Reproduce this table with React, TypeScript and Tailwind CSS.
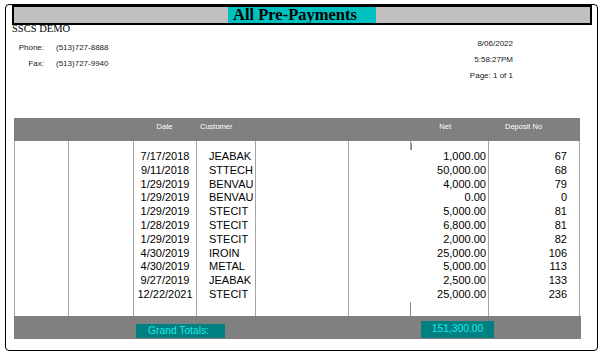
import React from 'react';

type Payment = {
  date: string;
  customer: string;
  net: string;
  deposit: string;
};

const payments: Payment[] = [
  { date: '7/17/2018', customer: 'JEABAK', net: '1,000.00', deposit: '67' },
  { date: '9/11/2018', customer: 'STTECH', net: '50,000.00', deposit: '68' },
  { date: '1/29/2019', customer: 'BENVAU', net: '4,000.00', deposit: '79' },
  { date: '1/29/2019', customer: 'BENVAU', net: '0.00', deposit: '0' },
  { date: '1/29/2019', customer: 'STECIT', net: '5,000.00', deposit: '81' },
  { date: '1/28/2019', customer: 'STECIT', net: '6,800.00', deposit: '81' },
  { date: '1/29/2019', customer: 'STECIT', net: '2,000.00', deposit: '82' },
  { date: '4/30/2019', customer: 'IROIN', net: '25,000.00', deposit: '106' },
  { date: '4/30/2019', customer: 'METAL', net: '5,000.00', deposit: '113' },
  { date: '9/27/2019', customer: 'JEABAK', net: '2,500.00', deposit: '133' },
  { date: '12/22/2021', customer: 'STECIT', net: '25,000.00', deposit: '236' },
];

const cols =
  'grid grid-cols-[54px_65px_63px_59px_93px_62px_78px_92px]';
const cell = 'border-l border-[#a4a4a4]';
const last = 'border-x border-[#a4a4a4]';

// Report header
// ---------------
const ReportHeader = () => (
  <>
    <div className="ml-[6px] flex h-[20px] w-[580px] justify-center border-2 border-black bg-[#c0c0c0]">
      <div className="h-full w-[148px] bg-[#00c0c0] pl-[5px] font-['Liberation_Serif',serif] text-[16.5px] font-bold leading-[16px] text-black">
        All Pre-Payments
      </div>
    </div>
    <div className="-mt-px ml-[6px] h-[10px] font-['Liberation_Serif',serif] text-[10.5px] leading-[10px] text-black">
      SSCS DEMO
    </div>
    <div className="flex h-[84px] items-start justify-between font-['Liberation_Sans',sans-serif] text-[8px] leading-[16px] text-[#1a1a1a]">
      <div className="ml-[6px] mt-[6px] grid grid-cols-[32px_auto] gap-x-[12px]">
        <span className="text-right">Phone:</span>
        <span>(513)727-8888</span>
        <span className="text-right">Fax:</span>
        <span>(513)727-9940</span>
      </div>
      <div className="mr-[84px] mt-[2px] flex flex-col items-end">
        <span>8/06/2022</span>
        <span>5:58:27PM</span>
        <span>Page: 1 of 1</span>
      </div>
    </div>
  </>
);

// Table
// ---------------
const PaymentsTable = () => (
  <div className="ml-[8px] w-[567px] font-['Liberation_Sans',sans-serif]">
    <div className="flex h-[23px] w-[566px] bg-[#808080] pt-[4px] text-[7.5px] leading-[10px] text-white">
      <div className="w-[119px]" />
      <div className="w-[63px] text-center">Date</div>
      <div className="w-[59px] pl-[4px]">Customer</div>
      <div className="w-[233px] pr-[37px] text-right">Net</div>
      <div className="w-[92px] pl-[17px]">Deposit No</div>
    </div>

    <div className="w-[566px] text-[11px] leading-[13.8px] text-black">
      <div className={`${cols} h-[9px]`}>
        <div className={cell} />
        <div className={cell} />
        <div className={cell} />
        <div className={cell} />
        <div className={cell} />
        <div className={cell} />
        <div className={cell}>
          <div className="mt-[2px] h-[7px] border-l border-[#8a8a8a]" />
        </div>
        <div className={last} />
      </div>

      {payments.map((p, i) => (
        <div key={i} className={`${cols} h-[13.8px]`}>
          <div className={cell} />
          <div className={cell} />
          <div className={`${cell} text-center`}>{p.date}</div>
          <div className={`${cell} pl-[12px]`}>{p.customer}</div>
          <div className={cell} />
          <div className={cell} />
          <div className="pr-[2px] text-right">{p.net}</div>
          <div className={`${last} pr-[12px] text-right`}>{p.deposit}</div>
        </div>
      ))}

      <div className={`${cols} h-[14px]`}>
        <div className={cell} />
        <div className={cell} />
        <div className={cell} />
        <div className={cell} />
        <div className={cell} />
        <div className={cell} />
        <div className="border-l border-[#8a8a8a]" />
        <div className={last} />
      </div>
    </div>

    <div className="flex h-[23px] w-[567px] items-end bg-[#808080] pb-[1px] text-[10.25px] leading-[14px] text-[#22e8e8]">
      <div className="w-[122px]" />
      <div className="h-[14px] w-[89px] bg-[#008080] pr-[4px] text-center">
        Grand Totals:
      </div>
      <div className="w-[196px]" />
      <div className="flex h-[17px] w-[73px] items-center justify-center bg-[#008080]">
        151,300.00
      </div>
    </div>
  </div>
);

// Component
// ---------------
export default function App() {
  return (
    <div className="h-[356px] w-[602px] bg-white pl-[5px] pt-[4px]">
      <div className="h-[347px] w-[593px] rounded-[4px] border border-black">
        <ReportHeader />
        <PaymentsTable />
      </div>
    </div>
  );
}
